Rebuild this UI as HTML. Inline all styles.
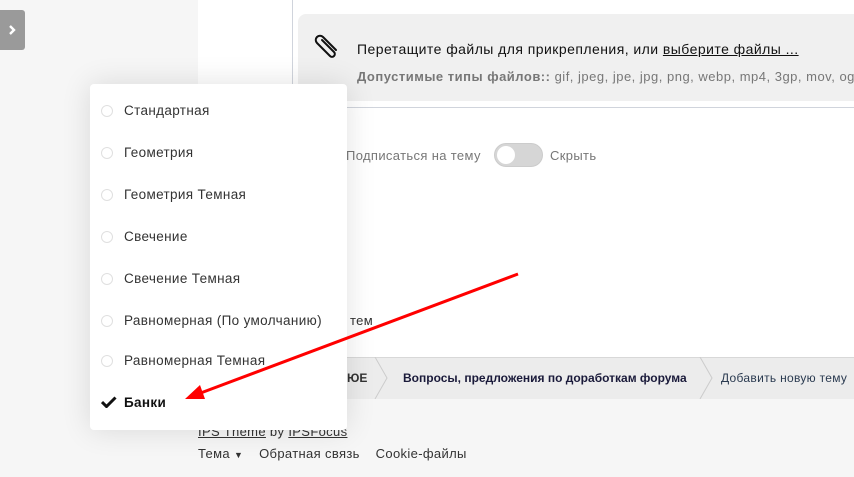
<!DOCTYPE html>
<html><head><meta charset="utf-8"><style>
*{margin:0;padding:0;box-sizing:border-box}
body{width:854px;height:477px;overflow:hidden;background:#f6f6f6;font-family:"Liberation Sans","DejaVu Sans",sans-serif;position:relative;color:#222}
.abs{position:absolute}
.m{letter-spacing:.35px}
</style></head><body>
<div class="abs" style="left:0;top:10px;width:25px;height:40px;background:#9a9a9a;border-radius:0 3px 3px 0"></div>
<svg class="abs" style="left:6px;top:24px" width="12" height="12" viewBox="0 0 12 12"><path d="M4 2l4 4-4 4" stroke="#fff" stroke-width="2.4" fill="none"/></svg>
<div class="abs" style="left:198px;top:0;width:656px;height:357px;background:#fff"></div>
<div class="abs" style="left:292px;top:0;width:1px;height:84px;background:#d0d4dc"></div>
<div class="abs" style="left:298px;top:14px;width:570px;height:87px;background:#f0f0f0;border-radius:8px"></div>
<svg class="abs" style="left:312px;top:30px" width="30" height="30" viewBox="0 0 30 30"><path d="M24 20 L11 7 a4 4 0 0 0 -6 6 L18 26 a2.5 2.5 0 0 0 4 -4 L10 10" stroke="#111" stroke-width="2" fill="none" stroke-linecap="round"/></svg>
<div class="abs m" style="left:357px;top:41px;font-size:14px;color:#111;white-space:nowrap;letter-spacing:.45px">Перетащите файлы для прикрепления, или <u>выберите файлы ...</u></div>
<div class="abs m" style="left:357px;top:69px;font-size:13px;color:#777;white-space:nowrap;letter-spacing:.5px"><b>Допустимые типы файлов::</b> gif, jpeg, jpe, jpg, png, webp, mp4, 3gp, mov, ogg</div>
<div class="abs" style="left:298px;top:107px;width:556px;height:1px;background:#d0d4dc"></div>
<div class="abs m" style="left:346px;top:148px;font-size:13px;color:#777;white-space:nowrap">Подписаться на тему</div>
<div class="abs" style="left:494px;top:143px;width:49px;height:24px;border-radius:12px;background:#d6d6d6;border:1px solid #ccc"></div>
<div class="abs" style="left:497px;top:146px;width:18px;height:18px;border-radius:50%;background:#fff"></div>
<div class="abs m" style="left:550px;top:148px;font-size:13px;color:#777">Скрыть</div>
<div class="abs m" style="left:350px;top:313px;font-size:13px;color:#333">тем</div>
<div class="abs" style="left:198px;top:357px;width:656px;height:42px;background:#ececec;border-top:1px solid #d8d8d8"></div>
<svg class="abs" style="left:372px;top:357px" width="20" height="42"><path d="M3 0 L15 21 L3 42" stroke="#ccc" fill="none"/></svg>
<svg class="abs" style="left:697px;top:357px" width="20" height="42"><path d="M3 0 L15 21 L3 42" stroke="#ccc" fill="none"/></svg>
<div class="abs" style="left:347px;top:371px;font-size:12px;font-weight:bold;color:#333">ЮЕ</div>
<div class="abs" style="left:403px;top:371px;font-size:12px;font-weight:bold;color:#1a1a3a;white-space:nowrap">Вопросы, предложения по доработкам форума</div>
<div class="abs" style="left:721px;top:371px;font-size:12px;color:#2a3a50;white-space:nowrap;letter-spacing:.3px">Добавить новую тему</div>
<div class="abs m" style="left:198px;top:424px;font-size:13px;color:#333"><u>IPS Theme</u> by <u>IPSFocus</u></div>
<div class="abs m" style="left:198px;top:446px;font-size:13px;color:#333;white-space:nowrap">Тема <span style="font-size:9px">▼</span>&nbsp;&nbsp;&nbsp;&nbsp;Обратная связь&nbsp;&nbsp;&nbsp;&nbsp;Cookie-файлы</div>
<div class="abs" style="left:90px;top:84px;width:257px;height:346px;background:#fff;border-radius:4px;box-shadow:0 0 30px rgba(0,0,0,.12)"></div>
<div class="abs m" style="left:101px;top:0;font-size:13.5px;color:#333;white-space:nowrap">
<div class="abs" style="top:103px"><span style="display:inline-block;width:12px;height:12px;border:1.5px solid #e0e0e0;border-radius:50%;vertical-align:-2px;margin-right:11px"></span>Стандартная</div>
<div class="abs" style="top:145px"><span style="display:inline-block;width:12px;height:12px;border:1.5px solid #e0e0e0;border-radius:50%;vertical-align:-2px;margin-right:11px"></span>Геометрия</div>
<div class="abs" style="top:187px"><span style="display:inline-block;width:12px;height:12px;border:1.5px solid #e0e0e0;border-radius:50%;vertical-align:-2px;margin-right:11px"></span>Геометрия Темная</div>
<div class="abs" style="top:229px"><span style="display:inline-block;width:12px;height:12px;border:1.5px solid #e0e0e0;border-radius:50%;vertical-align:-2px;margin-right:11px"></span>Свечение</div>
<div class="abs" style="top:271px"><span style="display:inline-block;width:12px;height:12px;border:1.5px solid #e0e0e0;border-radius:50%;vertical-align:-2px;margin-right:11px"></span>Свечение Темная</div>
<div class="abs" style="top:313px"><span style="display:inline-block;width:12px;height:12px;border:1.5px solid #e0e0e0;border-radius:50%;vertical-align:-2px;margin-right:11px"></span>Равномерная (По умолчанию)</div>
<div class="abs" style="top:353px"><span style="display:inline-block;width:12px;height:12px;border:1.5px solid #e0e0e0;border-radius:50%;vertical-align:-2px;margin-right:11px"></span>Равномерная Темная</div>
<div class="abs" style="top:395px;font-weight:bold;color:#111"><svg width="16" height="12" viewBox="0 0 16 12" style="margin-right:7px;vertical-align:-1px"><path d="M1 6 L5.5 10.5 L14.5 1.5" stroke="#111" stroke-width="3" fill="none"/></svg>Банки</div>
</div>
<svg class="abs" style="left:0;top:0" width="854" height="477"><line x1="518" y1="274" x2="198" y2="394" stroke="#f00" stroke-width="3"/><path d="M185 399 L200 385 L205 399 Z" fill="#f00"/></svg>
</body></html>
